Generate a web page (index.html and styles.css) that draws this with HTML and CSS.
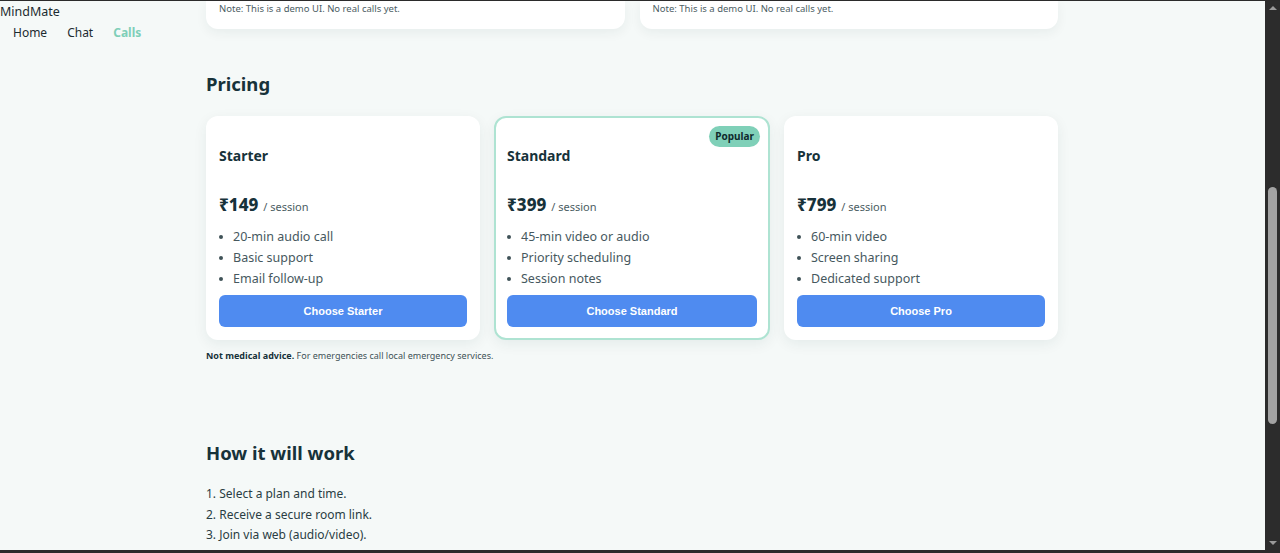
FILE: index.html
```
<!DOCTYPE html>
<html lang="en">
<head>
<meta charset="utf-8">
<title>MindMate — Calls</title>
<link rel="stylesheet" href="styles.css">
</head>
<body>
<div class="viewport">
  <header class="site-header">
    <div class="brand">MindMate</div>
    <nav class="nav">
      <a class="nav-link">Home</a>
      <a class="nav-link">Chat</a>
      <a class="nav-link active">Calls</a>
    </nav>
  </header>
  <main class="content">
    <div class="top-cards">
      <div class="top-card"><p class="note">Note: This is a demo UI. No real calls yet.</p></div>
      <div class="top-card"><p class="note">Note: This is a demo UI. No real calls yet.</p></div>
    </div>

    <h2 class="section-title pricing-title">Pricing</h2>
    <div class="plans">
      <div class="plan">
        <h3 class="plan-name">Starter</h3>
        <div class="price"><span class="amount">₹149</span><span class="per">/ session</span></div>
        <ul class="features">
          <li>20-min audio call</li>
          <li>Basic support</li>
          <li>Email follow-up</li>
        </ul>
        <button class="choose">Choose Starter</button>
      </div>
      <div class="plan featured">
        <span class="badge">Popular</span>
        <h3 class="plan-name">Standard</h3>
        <div class="price"><span class="amount">₹399</span><span class="per">/ session</span></div>
        <ul class="features">
          <li>45-min video or audio</li>
          <li>Priority scheduling</li>
          <li>Session notes</li>
        </ul>
        <button class="choose">Choose Standard</button>
      </div>
      <div class="plan">
        <h3 class="plan-name">Pro</h3>
        <div class="price"><span class="amount">₹799</span><span class="per">/ session</span></div>
        <ul class="features">
          <li>60-min video</li>
          <li>Screen sharing</li>
          <li>Dedicated support</li>
        </ul>
        <button class="choose">Choose Pro</button>
      </div>
    </div>
    <p class="disclaimer"><strong>Not medical advice.</strong> For emergencies call local emergency services.</p>

    <h2 class="section-title how-title">How it will work</h2>
    <ol class="steps">
      <li>Select a plan and time.</li>
      <li>Receive a secure room link.</li>
      <li>Join via web (audio/video).</li>
    </ol>
  </main>
</div>
<div class="scrollbar">
  <span class="arrow up"></span>
  <div class="track"><div class="thumb"></div></div>
  <span class="arrow down"></span>
</div>
</body>
</html>
```
FILE: styles.css
```
* { box-sizing: border-box; }
html, body { margin: 0; padding: 0; }
body {
  width: 1280px;
  height: 553px;
  overflow: hidden;
  display: flex;
  border-top: 1px solid #2b2b2b;
  border-bottom: 3px solid #2b2b2b;
  background: #f5f9f8;
  font-family: "Noto Sans", "Open Sans", Arial, sans-serif;
  color: #17323a;
}
.viewport {
  flex: 1;
  display: grid;
  grid-template-columns: 206px 852px 1fr;
  align-items: start;
  overflow: hidden;
}
.site-header { padding-top: 2px; }
.brand { font-size: 12.5px; line-height: 18px; color: #1c2b30; }
.nav { display: flex; gap: 20px; padding-left: 13px; margin-top: 3px; }
.nav-link { font-size: 12px; line-height: 18px; color: #1c2b30; }
.nav-link.active { color: #7fcfb8; font-weight: 700; }

.content { display: flex; flex-direction: column; }
.top-cards { display: grid; grid-template-columns: 1fr 1fr; gap: 15px; }
.top-card {
  background: #fff;
  border-radius: 0 0 12px 12px;
  padding: 1px 13px 0;
  height: 28px;
  box-shadow: 0 4px 12px rgba(20, 50, 50, 0.06);
}
.note { margin: 0; font-size: 9.5px; line-height: 14px; color: #4b5d63; }

.section-title { margin: 0; font-size: 18.5px; font-weight: 700; line-height: 26px; color: #17323a; }
.pricing-title { margin-top: 42px; }
.plans { display: grid; grid-template-columns: 274px 276px 274px; gap: 14px; margin-top: 19px; }
.plan {
  position: relative;
  background: #fff;
  border: 2px solid transparent;
  border-radius: 12px;
  padding: 11px;
  display: flex;
  flex-direction: column;
  box-shadow: 0 4px 14px rgba(20, 50, 50, 0.07);
}
.plan.featured { border-color: #aee3d2; }
.badge {
  position: absolute;
  top: 8px;
  right: 8px;
  background: #7fd0b8;
  color: #0f2a2c;
  font-size: 10px;
  font-weight: 700;
  line-height: 21px;
  padding: 0 6px;
  border-radius: 999px;
}
.plan-name { margin: 17px 0 0; font-size: 14px; line-height: 20px; font-weight: 700; }
.price { margin-top: 27px; line-height: 24px; display: flex; align-items: baseline; gap: 5px; }
.amount { font-size: 17px; font-weight: 800; color: #17323a; }
.per { font-size: 11px; color: #4b5d63; }
.features { list-style: none; margin: 7px 0 0; padding: 0; }
.features li {
  font-size: 12.5px; line-height: 21px; color: #46585e;
  display: flex; align-items: center; gap: 10px;
}
.features li::before {
  content: ""; width: 4px; height: 4px; border-radius: 50%; background: #3f5257;
}
.choose {
  flex-shrink: 0;
  margin-top: 6px;
  height: 32px;
  border: 0;
  border-radius: 6px;
  background: #4f8bf0;
  color: #fff;
  font-family: "Liberation Sans", Arial, sans-serif;
  font-size: 11px;
  font-weight: 700;
}
.disclaimer { margin: 9px 0 0; font-size: 9px; line-height: 14px; color: #3f5257; }
.disclaimer strong { color: #17323a; }

.how-title { margin-top: 77px; }
.steps { margin: 18px 0 0; padding: 0; list-style-position: inside; }
.steps li { font-size: 12px; line-height: 20.5px; color: #2a3d43; }

.scrollbar {
  width: 15px;
  background: #2c2c2c;
  display: flex;
  flex-direction: column;
  align-items: center;
}
.arrow { width: 0; height: 0; border-left: 4px solid transparent; border-right: 4px solid transparent; }
.arrow.up { border-bottom: 4px solid #9a9a9a; margin-top: 5px; }
.arrow.down { border-top: 4px solid #9a9a9a; margin-bottom: 5px; }
.track { flex: 1; width: 100%; display: flex; justify-content: center; padding-top: 177px; }
.thumb { width: 9px; height: 237px; background: #a3a3a3; border-radius: 5px; }
```
